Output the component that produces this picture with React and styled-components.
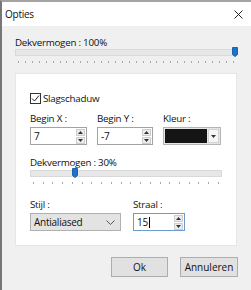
import React from 'react';
import styled, { createGlobalStyle } from 'styled-components';

const Global = createGlobalStyle`
  html, body { margin: 0; padding: 0; background: #f0f0f0; }
  body {
    font-family: "Open Sans", "Noto Sans", sans-serif;
    font-size: 9.8px;
    letter-spacing: -0.25px;
    color: #111;
  }
`;

const Window = styled.div`
  width: 251px;
  height: 290px;
  box-sizing: border-box;
  border-top: 2px solid #a3a3a3;
  border-left: 2px solid #777;
  background: #f0f0f0;
  display: flex;
  flex-direction: column;
  overflow: hidden;
`;

const TitleBar = styled.div`
  height: 24px;
  flex: none;
  background: #fff;
  display: flex;
  align-items: center;
  justify-content: space-between;
  padding: 0 8px 0 3px;
  font-size: 10px;
`;

const Body = styled.div`
  padding: 10px 13px 0 13px;
  display: flex;
  flex-direction: column;
`;

const Label = styled.div`
  line-height: 13px;
  height: 13px;
  white-space: nowrap;
`;

const SliderWrap = styled.div`
  position: relative;
  width: ${p => p.$width}px;
  height: 14px;
`;

const Track = styled.div`
  position: absolute;
  left: 0;
  right: 0;
  top: 0;
  height: 7px;
  box-sizing: border-box;
  background: #e7e7e7;
  border: 1px solid #d9d9d9;
`;

const Thumb = styled.svg`
  position: absolute;
  top: -2px;
`;

const Ticks = styled.div`
  position: absolute;
  left: 3px;
  right: 3px;
  top: 12px;
  height: 2px;
  display: flex;
  justify-content: space-between;
  span {
    width: 1px;
    height: 2px;
    background: #a9a9a9;
  }
`;

function Slider({ width, pos, ticks }) {
  return (
    <SliderWrap $width={width}>
      <Track />
      <Ticks>
        {Array.from({ length: ticks }).map((_, i) => <span key={i} />)}
      </Ticks>
      <Thumb width="6" height="10" viewBox="0 0 6 10" style={{ left: pos - 3 }}>
        <path d="M0.5 0.5 H5.5 V7.5 L3 9.5 L0.5 7.5 Z" fill="#1f73c7" stroke="#1864b0" />
      </Thumb>
    </SliderWrap>
  );
}

const Panel = styled.div`
  margin-top: 10px;
  width: 222px;
  box-sizing: border-box;
  background: #fff;
  border: 1px solid #e6e6e6;
  padding: 18px 0 14px 14px;
  display: flex;
  flex-direction: column;
`;

const CheckRow = styled.label`
  display: flex;
  align-items: center;
  gap: 2px;
  height: 13px;
`;

const Box = styled.span`
  width: 11px;
  height: 11px;
  box-sizing: border-box;
  border: 1px solid #333;
  display: flex;
  align-items: center;
  justify-content: center;
  background: #fff;
`;

const FieldRow = styled.div`
  display: flex;
  gap: ${p => p.$gap}px;
  margin-top: ${p => p.$top}px;
`;

const Field = styled.div`
  display: flex;
  flex-direction: column;
  gap: ${p => p.$gap ?? 2}px;
`;

const Input = styled.div`
  width: ${p => p.$width}px;
  height: 18px;
  box-sizing: border-box;
  border: 1px solid ${p => (p.$focus ? '#6d9ccc' : '#a3a3a3')};
  background: #fff;
  display: flex;
  align-items: center;
  justify-content: space-between;
  padding: 0 1px 0 3px;
  font-size: 10px;
`;

const Caret = styled.span`
  display: inline-block;
  width: 1px;
  height: 11px;
  background: #000;
  vertical-align: -2px;
  margin-left: 1px;
`;

const Spin = styled.div`
  display: flex;
  flex-direction: column;
  gap: 1px;
  span {
    width: 9px;
    height: 7px;
    background: #ececec;
    border: 1px solid #cdcdcd;
    box-sizing: border-box;
    display: flex;
    align-items: center;
    justify-content: center;
  }
`;

const Arrow = ({ up }) => (
  <svg width="5" height="3" viewBox="0 0 5 3">
    <path d={up ? 'M0 3 L2.5 0 L5 3 Z' : 'M0 0 L2.5 3 L5 0 Z'} fill="#333" />
  </svg>
);

function SpinInput({ value, width, focus }) {
  return (
    <Input $width={width} $focus={focus}>
      <span>{value}{focus && <Caret />}</span>
      <Spin>
        <span><Arrow up /></span>
        <span><Arrow /></span>
      </Spin>
    </Input>
  );
}

const ColorPick = styled.div`
  width: 58px;
  height: 18px;
  box-sizing: border-box;
  border: 1px solid #b4b4b4;
  background: #e6e6e6;
  display: flex;
  align-items: center;
  padding: 1px;
  gap: 1px;
`;

const Swatch = styled.div`
  width: 42px;
  height: 14px;
  background: #141414;
`;

const DropBtn = styled.div`
  flex: 1;
  height: 14px;
  background: #f6f6f6;
  border: 1px solid #d2d2d2;
  box-sizing: border-box;
  display: flex;
  align-items: center;
  justify-content: center;
`;

const Select = styled.div`
  width: 91px;
  height: 18px;
  box-sizing: border-box;
  border: 1px solid #b0b0b0;
  background: #e3e3e3;
  display: flex;
  align-items: center;
  justify-content: space-between;
  padding: 0 5px 0 3px;
  font-size: 10px;
`;

const Buttons = styled.div`
  display: flex;
  justify-content: flex-end;
  gap: 12px;
  margin-top: 11px;
`;

const Button = styled.button`
  width: ${p => p.$width}px;
  height: 20px;
  box-sizing: border-box;
  border: 1px solid #adadad;
  background: #e1e1e1;
  font: inherit;
  font-size: 10px;
  padding: 0;
  color: #111;
`;

export default function App() {
  return (
    <>
      <Global />
      <Window>
        <TitleBar>
          <span>Opties</span>
          <svg width="9" height="9" viewBox="0 0 9 9">
            <path d="M0.5 0.5 L8.5 8.5 M8.5 0.5 L0.5 8.5" stroke="#222" strokeWidth="1" />
          </svg>
        </TitleBar>
        <Body>
          <Label>Dekvermogen : 100%</Label>
          <Slider width={222} pos={220} ticks={32} />
          <Panel>
            <CheckRow>
              <Box>
                <svg width="9" height="9" viewBox="0 0 9 9">
                  <path d="M1 4.5 L3.5 7 L8 1.5" fill="none" stroke="#222" strokeWidth="1" />
                </svg>
              </Box>
              <span>Slagschaduw</span>
            </CheckRow>
            <FieldRow $gap={10} $top={7}>
              <Field>
                <Label>Begin X :</Label>
                <SpinInput value="7" width={57} />
              </Field>
              <Field>
                <Label>Begin Y :</Label>
                <SpinInput value="-7" width={56} />
              </Field>
              <Field>
                <Label>Kleur :</Label>
                <ColorPick>
                  <Swatch />
                  <DropBtn><Arrow /></DropBtn>
                </ColorPick>
              </Field>
            </FieldRow>
            <FieldRow $gap={0} $top={11}>
              <Field $gap={1}>
                <Label>Dekvermogen : 30%</Label>
                <Slider width={192} pos={45} ticks={20} />
              </Field>
            </FieldRow>
            <FieldRow $gap={12} $top={14}>
              <Field>
                <Label>Stijl :</Label>
                <Select>
                  <span>Antialiased</span>
                  <svg width="9" height="5" viewBox="0 0 9 5">
                    <path d="M0.5 0.5 L4.5 4.5 L8.5 0.5" fill="none" stroke="#555" />
                  </svg>
                </Select>
              </Field>
              <Field>
                <Label>Straal :</Label>
                <SpinInput value="15" width={52} focus />
              </Field>
            </FieldRow>
          </Panel>
          <Buttons>
            <Button $width={57}>Ok</Button>
            <Button $width={58}>Annuleren</Button>
          </Buttons>
        </Body>
      </Window>
    </>
  );
}
